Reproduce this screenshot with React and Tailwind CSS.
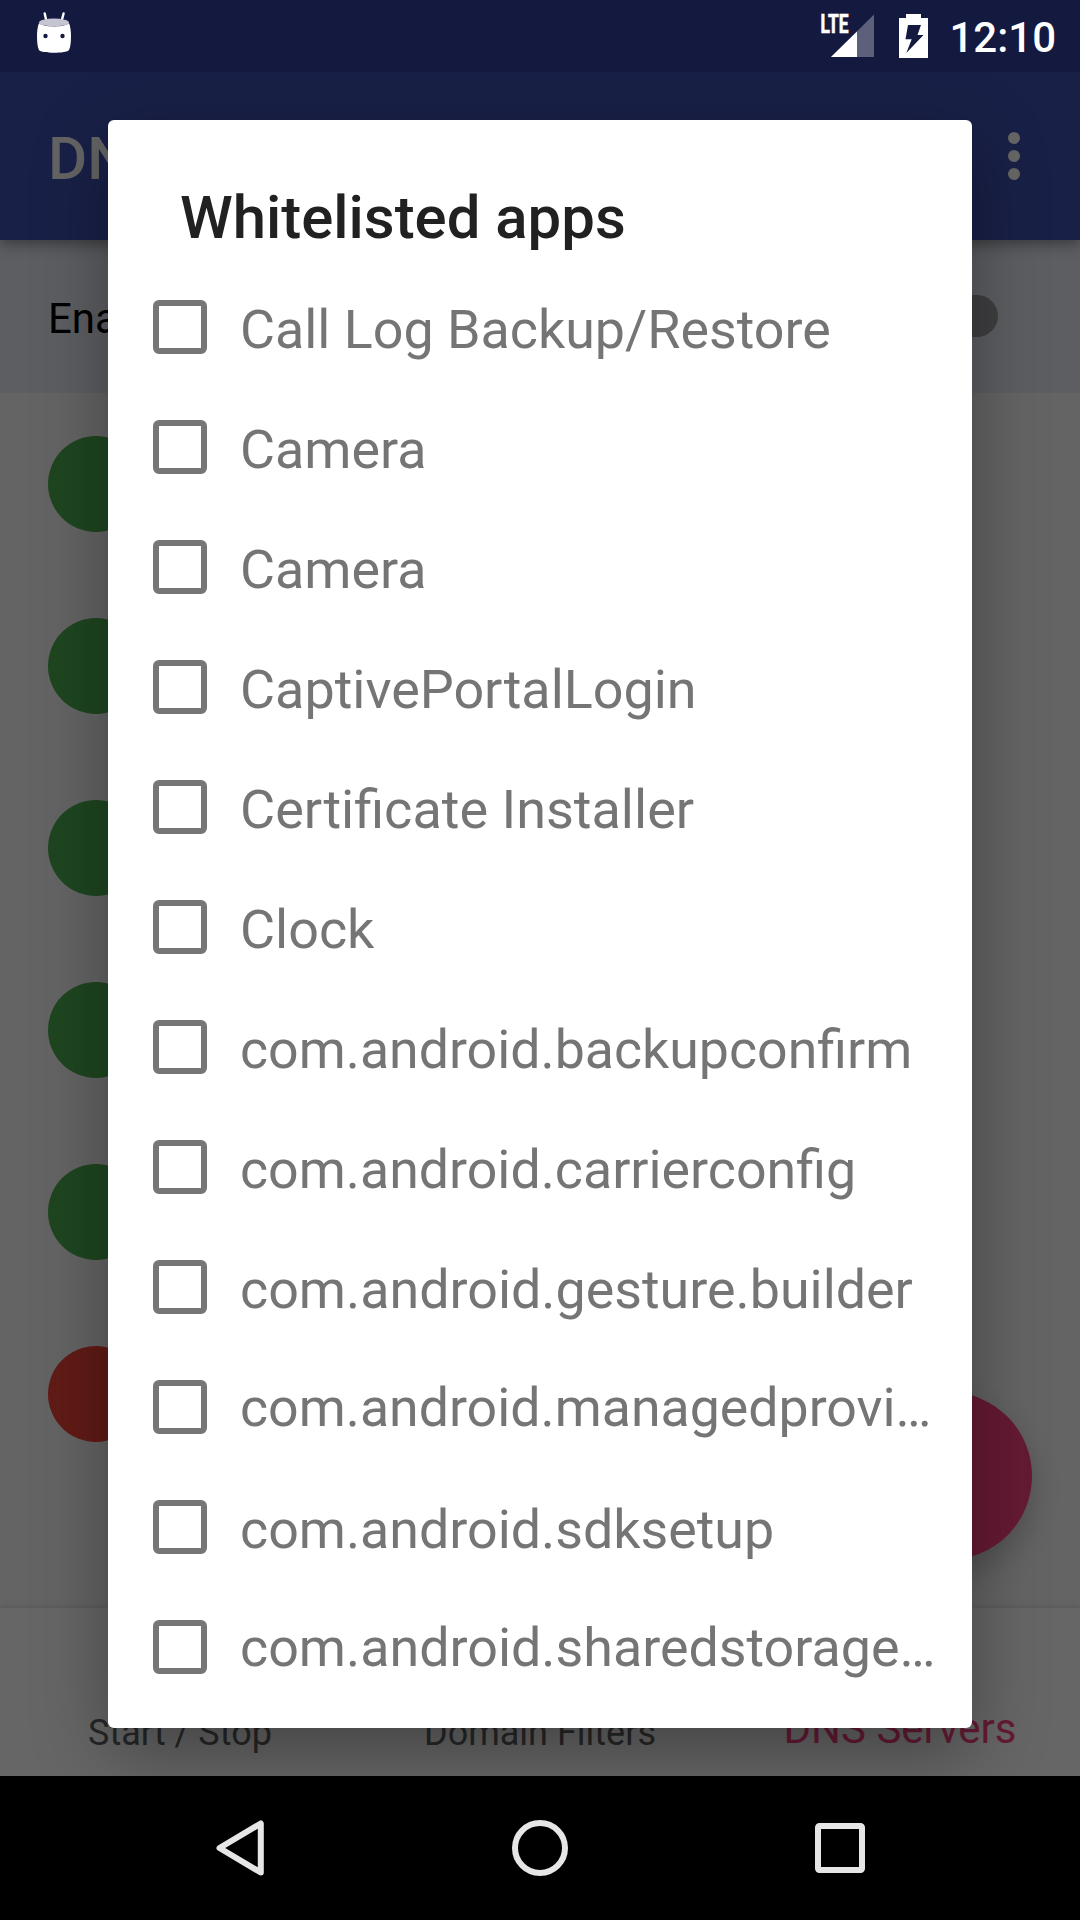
const apps = [
  { name: "Call Log Backup/Restore", text: "text-[53.8px]" },
  { name: "Camera", text: "text-[53.8px]" },
  { name: "Camera", text: "text-[53.8px]" },
  { name: "CaptivePortalLogin", text: "text-[53.9px]" },
  { name: "Certificate Installer", text: "text-[54px]" },
  { name: "Clock", text: "text-[53.9px]" },
  { name: "com.android.backupconfirm", text: "text-[53.67px]" },
  { name: "com.android.carrierconfig", text: "text-[53.7px]" },
  { name: "com.android.gesture.builder", text: "text-[53.8px]" },
  { name: "com.android.managedprovi…", text: "text-[53.67px]" },
  { name: "com.android.sdksetup", text: "text-[53.75px]" },
  { name: "com.android.sharedstorage…", text: "text-[53.8px]" },
];

const servers = [true, true, true, true, true, false];

function StatusBar() {
  return (
    <div className="relative z-20 flex h-[72px] shrink-0 items-start justify-between bg-[#141940] text-white">
      <svg className="ml-9 h-[72px] w-9" viewBox="36 0 36 72">
        <path d="M44.700 13.500 46.400 21M63.600 13.500 61.600 21" stroke="#fff" strokeWidth="2.400" strokeLinecap="round" />
        <path d="M39 23C42 27.500 66 27.500 69 23C70.500 27 71 31 71 36C71 42 70.500 47 69 50C66.500 53.700 41.500 53.700 39 50C37.500 47 37 42 37 36C37 31 37.500 27 39 23Z" fill="#fff" />
        <ellipse cx="54" cy="22.500" rx="15" ry="3.900" fill="#c4c5d0" />
        <circle cx="45.500" cy="36" r="2.200" fill="#141940" />
        <circle cx="62.500" cy="36" r="2.200" fill="#141940" />
      </svg>
      <div className="flex items-start">
        <svg className="h-[72px] w-[60px]" viewBox="818 0 60 72">
          <text x="820.500" y="33.300" fill="#fff" stroke="#fff" strokeWidth=".7" fontFamily="Roboto" fontSize="25.500" fontWeight="700" textLength="28" lengthAdjust="spacingAndGlyphs">LTE</text>
          <path d="M874 14.500V57H831Z" fill="#fff" opacity=".31" />
          <path d="M857 31.500V57H831Z" fill="#fff" />
        </svg>
        <svg className="ml-[18px] h-[72px] w-9" viewBox="896 0 36 72">
          <path d="M906 14H921V18H928V58H899V18H906Z" fill="#fff" />
          <path d="M908 25H921L917.500 35H923.500L906.300 53L911.700 39.300H905.500Z" fill="#141940" />
        </svg>
        <span className="mr-6 ml-[17px] h-[72px] w-[107px] text-right text-[42px] leading-[75px] font-medium">12:10</span>
      </div>
    </div>
  );
}

function Page() {
  return (
    <div className="flex min-h-0 flex-1 flex-col">
      <header className="relative z-10 flex h-[168px] shrink-0 items-center justify-between bg-[#192047] pr-[60px] pl-12 shadow-[0_4px_14px_rgba(0,0,0,0.4)]">
        <h1 className="mt-[5px] text-[60px] font-medium text-[#646464]">DNS66</h1>
        <div className="flex flex-col gap-1.5">
          <i className="size-3 rounded-full bg-[#666664]" />
          <i className="size-3 rounded-full bg-[#666664]" />
          <i className="size-3 rounded-full bg-[#666664]" />
        </div>
      </header>
      <div className="flex h-[153px] shrink-0 items-center justify-between bg-[#5d5e62] pr-[82px] pl-12 text-[42px] text-black">
        <span className="mt-1">Enable</span>
        <i className="mb-0.5 h-[42px] w-[102px] rounded-full bg-[#3f3f41]" />
      </div>
      <main className="relative flex flex-1 flex-col gap-[86px] bg-[#646464] pt-[43px] pl-12">
        {servers.map((on, i) => (
          <i key={i} className={on ? "size-24 rounded-full bg-[#1e4620]" : "size-24 rounded-full bg-[#611b16]"} />
        ))}
        <button className="absolute right-12 bottom-12 size-[168px] rounded-full bg-[#651a34] shadow-[0_14px_30px_rgba(0,0,0,0.2)]" />
      </main>
      <div className="relative grid h-[168px] shrink-0 grid-cols-3 items-end bg-[#666666] pb-[22px] text-center text-[36px] leading-[42px] text-[#272727] shadow-[0_-1px_6px_rgba(0,0,0,0.13)]">
        <span>Start / Stop</span>
        <span>Domain Filters</span>
        <span className="pb-0.5 text-[42px] leading-[46px] text-[#651a34]">DNS Servers</span>
      </div>
    </div>
  );
}

function Dialog() {
  return (
    <section className="absolute top-[120px] left-[108px] z-10 flex h-[1608px] w-[864px] flex-col rounded-[6px] bg-white shadow-[0_24px_72px_rgba(0,0,0,0.34)]">
      <h2 className="h-[147px] shrink-0 pt-[62px] pl-[72px] text-[59.9px] leading-[72px] font-medium text-[#212121]">Whitelisted apps</h2>
      <ul>
        {apps.map(({ name, text }, i) => (
          <li key={i} className="flex h-[120px] items-center pl-[45px]">
            <i className="size-[54px] shrink-0 rounded-[6px] border-6 border-[#767676]" />
            <span className={name.endsWith("…") ? "ml-[33px] pt-px text-[54px] leading-[81px] whitespace-nowrap text-[#757575]" : "ml-[33px] pt-[5px] text-[54px] leading-[81px] whitespace-nowrap text-[#757575]"}>
              <span className={text}>{name}</span>
            </span>
          </li>
        ))}
      </ul>
    </section>
  );
}

function NavBar() {
  return (
    <nav className="relative z-20 flex h-36 shrink-0 items-center justify-between bg-black px-[210px]">
      <svg className="size-[60px]" viewBox="0 0 60 60" fill="none" stroke="#e6e6e6" strokeWidth="6" strokeLinejoin="round">
        <path d="M9.500 30 50.800 5.500V54.500Z" />
      </svg>
      <svg className="size-[60px]" viewBox="0 0 60 60" fill="none" stroke="#e6e6e6" strokeWidth="6">
        <circle cx="30" cy="30" r="25" />
      </svg>
      <svg className="size-[60px]" viewBox="0 0 60 60" fill="none" stroke="#e6e6e6" strokeWidth="6">
        <rect x="8" y="8" width="44" height="44" rx="1.500" />
      </svg>
    </nav>
  );
}

export default function App() {
  return (
    <div className="relative flex h-[1920px] w-[1080px] flex-col overflow-hidden font-[Roboto,sans-serif]">
      <StatusBar />
      <Page />
      <Dialog />
      <NavBar />
    </div>
  );
}
